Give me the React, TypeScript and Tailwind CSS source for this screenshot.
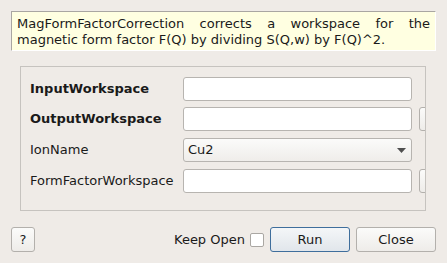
import React from 'react';

const font = { fontFamily: '"DejaVu Sans", sans-serif' };

const SideButton = () => (
  <div className="ml-[7px] h-6 w-[20px] shrink-0 rounded-[3px] border border-[#b3b0ac] bg-gradient-to-b from-[#fbfbfa] to-[#eeece9]" />
);

const TextField = () => (
  <div className="h-6 w-[229px] shrink-0 rounded-[3px] border border-[#b7b4b0] bg-white" />
);

export default function App() {
  return (
    <div className="h-[263px] w-[447px] overflow-hidden bg-[#efebe7] text-[13px] text-[#1a1a1a]" style={font}>
      {/* ---------- DESCRIPTION ---------- */}
      <div className="ml-[11px] mt-[11px] h-[40px] w-[425px] border-l border-t border-r border-b border-l-[#a9a6a2] border-t-[#a9a6a2] border-r-white border-b-white bg-[#ffffe1] px-[5px] pt-[4px] text-justify leading-[16px] [text-align-last:left]">
        MagFormFactorCorrection corrects a workspace for the magnetic form factor F(Q) by dividing S(Q,w) by F(Q)^2.
      </div>

      {/* ---------- PROPERTIES ---------- */}
      <div className="ml-[20px] mt-[15px] h-[145px] w-[406px] overflow-hidden border border-[#c6c3bf] pt-[10px]">
        <div className="flex h-6 items-center">
          <span className="w-[162px] shrink-0 pl-[9px] font-bold">InputWorkspace</span>
          <TextField />
        </div>
        <div className="mt-[6px] flex h-6 items-center">
          <span className="w-[162px] shrink-0 pl-[9px] font-bold">OutputWorkspace</span>
          <TextField />
          <SideButton />
        </div>
        <div className="mt-[7px] flex h-6 items-center">
          <span className="w-[162px] shrink-0 pl-[9px]">IonName</span>
          <div className="flex h-6 w-[229px] shrink-0 items-center justify-between rounded-[3px] border border-[#b7b4b0] bg-gradient-to-b from-[#fbfbfa] to-[#efedea] pl-[4px] pr-[5px]">
            <span>Cu2</span>
            <svg width="9" height="5" viewBox="0 0 9 5">
              <path d="M0 0 H9 L4.5 5 Z" fill="#4f4f4f" />
            </svg>
          </div>
        </div>
        <div className="mt-[7px] flex h-6 items-center">
          <span className="w-[162px] shrink-0 pl-[9px]">FormFactorWorkspace</span>
          <TextField />
          <SideButton />
        </div>
      </div>

      {/* ---------- BUTTONS ---------- */}
      <div className="mt-[16px] flex items-center pl-[11px]">
        <button className="h-[25px] w-[24px] rounded-[3px] border border-[#b3b0ac] bg-gradient-to-b from-[#fbfbfa] to-[#eeece9] text-[13px]">?</button>
        <span className="ml-[139px]">Keep Open</span>
        <div className="ml-[5px] h-[14px] w-[14px] rounded-[2px] border border-[#aaa7a3] bg-white" />
        <button className="ml-[6px] h-[25px] w-[80px] rounded-[3px] border border-[#3f6e9c] bg-gradient-to-b from-[#f4f6f8] to-[#e1e6eb]">Run</button>
        <button className="ml-[6px] h-[25px] w-[80px] rounded-[3px] border border-[#b3b0ac] bg-gradient-to-b from-[#fbfbfa] to-[#eeece9]">Close</button>
      </div>
    </div>
  );
}
